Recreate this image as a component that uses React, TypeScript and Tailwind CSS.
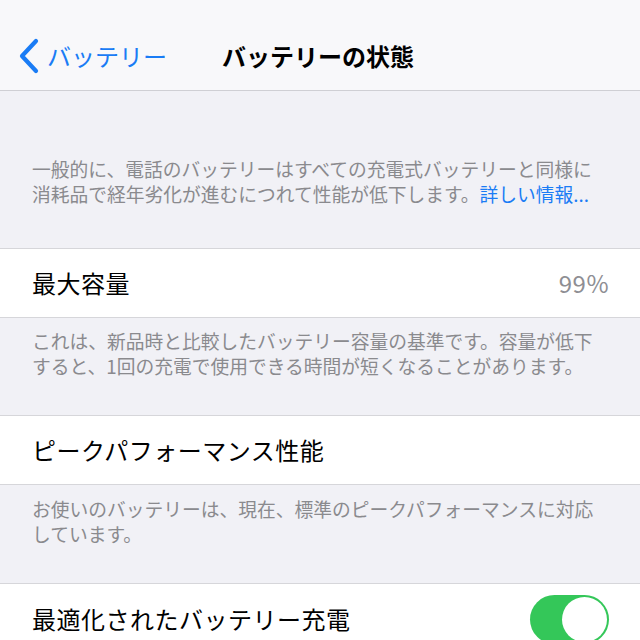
import React from 'react';

// iOS設定「バッテリーの状態」画面の再現

const font = { fontFamily: '"Noto Sans CJK JP", "Noto Sans", sans-serif' };

function Footer({ className, children }: { className: string; children: React.ReactNode }) {
  return (
    <div className={`px-[32px] text-[18.75px] leading-[24.5px] text-[#8a8a8e] whitespace-nowrap ${className}`}>
      {children}
    </div>
  );
}

function Row({ children, className = '' }: { children: React.ReactNode; className?: string }) {
  return (
    <div
      className={`flex items-center justify-between bg-white border-y border-[#d6d6da] pl-[32px] pr-[31px] text-[24px] tracking-[0.5px] text-black ${className}`}
    >
      {children}
    </div>
  );
}

export default function App() {
  return (
    <div style={font} className="w-[640px] h-[640px] overflow-hidden bg-[#f1f1f6]">
      {/* ナビゲーションバー */}
      <div className="h-[91px] bg-[#f8f8fa] border-b border-[#cfcfd4] flex items-end pb-[12px]">
        <div className="grid grid-cols-[1fr_auto_1fr] items-center w-full h-[44px]">
          <div className="flex items-center pl-[19px] text-[#1a7cf5] text-[24px]">
            <svg width="22" height="36" viewBox="0 0 22 36" className="mr-[6px]">
              <polyline
                points="17,3 3,18 17,33"
                fill="none"
                stroke="#1a7cf5"
                strokeWidth="4.2"
                strokeLinecap="round"
                strokeLinejoin="round"
              />
            </svg>
            <span>バッテリー</span>
          </div>
          <div className="text-[24px] font-bold text-black pr-[4px]">バッテリーの状態</div>
          <div />
        </div>
      </div>

      <Footer className="pt-[66px] pb-[42px]">
        一般的に、電話のバッテリーはすべての充電式バッテリーと同様に
        <br />
        消耗品で経年劣化が進むにつれて性能が低下します。
        <span className="text-[#1a7cf5]">詳しい情報...</span>
      </Footer>

      <Row className="h-[70px]">
        <span>最大容量</span>
        <span className="text-[#8e8e93]">99%</span>
      </Row>

      <Footer className="pt-[11px] pb-[37px]">
        これは、新品時と比較したバッテリー容量の基準です。容量が低下
        <br />
        すると、1回の充電で使用できる時間が短くなることがあります。
      </Footer>

      <Row className="h-[70px]">
        <span>ピークパフォーマンス性能</span>
      </Row>

      <Footer className="pt-[12px] pb-[37px]">
        お使いのバッテリーは、現在、標準のピークパフォーマンスに対応
        <br />
        しています。
      </Footer>

      <Row className="h-[72px]">
        <span>最適化されたバッテリー充電</span>
        <div className="w-[79px] h-[49px] rounded-full bg-[#34c759] flex items-center justify-end pr-[2px]">
          <div className="w-[45px] h-[45px] rounded-full bg-white" />
        </div>
      </Row>
    </div>
  );
}
